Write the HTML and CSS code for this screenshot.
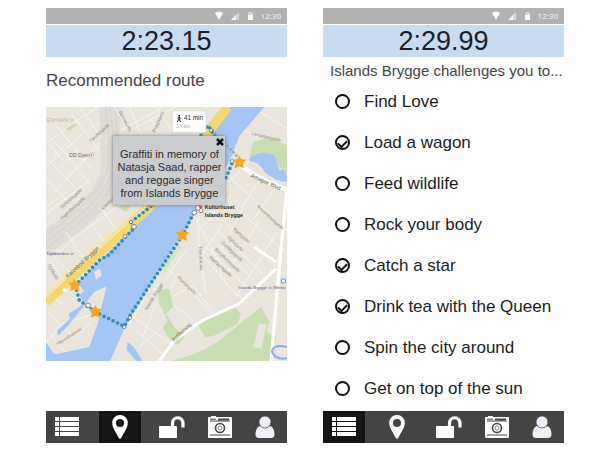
FILE: index.html
```html
<!DOCTYPE html>
<html lang="en">
<head>
<meta charset="utf-8">
<title>Islands Brygge</title>
<link rel="stylesheet" href="styles.css">
</head>
<body>
<svg class="sprite" aria-hidden="true">
  <symbol id="status" viewBox="0 0 38 12">
    <path d="M0 3Q4 0 8 3L4 10Z" fill="#fff"/>
    <path d="M16 10L24 2V10Z" fill="#d4d4d4"/><path d="M16 10L21 5V10Z" fill="#f4f4f4"/>
    <path d="M33 3H34V2H37V3H38V10H33Z" fill="#d8d8d8"/><path d="M33 5H38V10H33Z" fill="#fff"/>
  </symbol>
  <symbol id="list" viewBox="0 0 24 20">
    <path d="M0 0H4V4H0ZM5 0H24V4H5ZM0 5H4V9H0ZM5 5H24V9H5ZM0 10H4V14H0ZM5 10H24V14H5ZM0 15H4V19H0ZM5 15H24V19H5Z"/>
  </symbol>
  <symbol id="pin" viewBox="0 0 16 24">
    <path fill-rule="evenodd" d="M8 0A7.8 7.8 0 0 1 15.8 8C15.8 13 11.5 18 9.5 22.5Q8 25 6.500 22.500C4.500 18 .2 13 .2 8A7.800 7.800 0 0 1 8 0ZM8 4A4 4 0 1 0 8 12A4 4 0 0 0 8 4Z"/>
  </symbol>
  <symbol id="unlock" viewBox="0 0 26 22">
    <rect y="10" width="18" height="12" rx="1"/>
    <path d="M13.500 11V7.500A5.200 5.700 0 0 1 24 7.500V11.500" fill="none" stroke="#fff" stroke-width="3.200"/>
  </symbol>
  <symbol id="camera" viewBox="0 0 24 22">
    <rect y="1" width="24" height="21" rx="1"/><rect x="3" width="5" height="2"/>
    <path d="M2 3.200H8M2 5H22M2 19H22" fill="none" stroke="#444"/>
    <path d="M10 3.500H21" stroke="#444" stroke-width="2"/>
    <circle cx="12" cy="12" r="4.500" fill="#fff" stroke="#444" stroke-width="1.600"/>
    <circle cx="12" cy="12" r="2" fill="#fff" stroke="#888"/>
  </symbol>
  <symbol id="person" viewBox="0 0 20 22">
    <path d="M4.500 10Q10 13 15.500 10Q19.500 12 19.500 19Q19 22 16 22H4Q1 22 .5 19Q.5 12 4.500 10Z" fill="#f0eff5"/>
    <circle cx="10" cy="6" r="6" fill="#f0eff5" stroke="#444" stroke-width=".7"/>
  </symbol>
  <symbol id="star" viewBox="-20 -20 40 40">
    <path d="M0-20L6-9L20-8L11 3L14 18L0 12L-14 18L-11 3L-20-8L-6-9Z"/>
  </symbol>
</svg>

<main class="screens">
  <section class="screen">
    <header>
      <div class="status"><svg><use href="#status"/></svg><span>12:30</span></div>
      <div class="timer">2:23.15</div>
    </header>
    <h1 class="title route-title">Recommended route</h1>
    <div class="map">
      <svg class="map-art" viewBox="0 0 723 762" role="img" aria-label="Route map">
        <rect width="723" height="762" fill="#e9e5dc"/>
        <path d="M160 0H225L210 250Q180 330 0 445V365Q150 270 165 190Z" fill="#dedcd7"/>
        <g fill="none" stroke="#d3d2cf" stroke-width="3">
          <path d="M178 0Q196 110 184 190Q160 270 0 385M192 0Q208 110 198 195Q175 280 0 405M206 0Q220 120 210 200Q190 290 0 425"/>
        </g>
        <g fill="none" stroke="#f6f4ee" stroke-width="3">
          <path d="M0 110L80 50L155 0M0 180L110 80L160 50M20 260L90 190L165 105M0 80L60 140L130 230M30 55L140 190M75 20L160 130M0 150L90 245M0 215L60 280M20 150L80 90M40 185L100 120M60 215L130 140M0 300L60 255M0 320L130 220M10 110L50 160M100 0L165 90"/>
          <path d="M205 0L260 90M250 0L290 90M330 0L380 70M225 70L350 0M270 60L390 0M350 90L300 20M0 480L75 400L240 280M60 375L110 450M130 345L180 410M0 440L60 530M25 455L90 510M170 310L210 370"/>
          <path d="M445 325L520 470L530 520L605 590M455 330L460 430L480 560M470 300L560 215L640 130M500 240L723 440M540 200L723 370M590 180L680 90M620 0L723 65M580 60L723 140M530 340L690 480M510 365L650 500M490 390L625 520M480 420L600 540M465 440L560 550M530 350L450 470M590 300L500 490M640 340L530 520M690 380L570 570M560 260L480 350M420 430L320 570M360 480L500 620M320 540L440 640M400 500L370 550M300 570L250 650L350 740M260 630L390 720M330 590L290 690M280 720L360 650M380 570L440 535L500 610M640 220L590 300M690 240L620 340"/>
          <path d="M0 710L50 650L150 620M10 620L90 700M60 600L20 570M90 690L140 640M15 680L60 740"/>
        </g>
        <g fill="#c8ddb0">
          <path d="M455 655L560 595L585 620L575 650L500 688L478 690ZM370 762Q450 745 510 708L645 600L670 645L660 675L690 690L675 762Z"/>
          <path d="M335 550L370 545L382 600L360 620L385 660L415 690L395 715L365 690L350 660L365 640L340 590ZM620 105L665 92L723 115V200L700 180Q685 140 635 137L612 155ZM60 65L85 48L92 55L68 73ZM218 300L265 285L240 315Z"/>
          <path d="M392 410L405 420L355 500L348 485Z" fill="#d2e4c1"/>
        </g>
        <path d="M638 650L662 650L646 726L622 720Z" fill="#e9e5dc"/>
        <g fill="#a3c6f7">
          <path d="M552 0H655L580 87L550 165L460 302L400 390L240 655L192 762H0V725L30 742L130 720L155 650L182 538L145 555L95 620L65 658L36 686L34 670L72 635L68 620L115 590L95 555L88 535L245 378L270 340L320 285L460 95Z"/>
          <path d="M610 155Q640 125 685 145L700 190Q723 180 723 225Q690 225 655 195Q640 165 610 162ZM0 705L20 735L8 762H0ZM245 705L265 722L290 762H270L242 728Z"/>
        </g>
        <path d="M145 495L160 484L168 505L150 518ZM80 530L105 540L115 553L92 570Z" fill="#e9e5dc"/>
        <path d="M75 525L245 365" fill="none" stroke="#a3c6f7" stroke-width="5"/>
        <path d="M0 585L85 505L270 337L320 290L545 0" fill="none" stroke="#f6d66f" stroke-width="29"/>
        <path d="M0 570L85 490L270 325L310 290M0 555L110 450L260 315" fill="none" stroke="#f8e7ad" stroke-width="5"/>
        <g fill="none" stroke="#fff">
          <path d="M575 165Q620 210 723 248" stroke-width="14"/>
          <path d="M723 240L700 480L675 762" stroke-width="10"/>
          <path d="M340 762L385 700L470 640L580 590L690 485" stroke-width="9"/>
          <path d="M625 420L690 465" stroke-width="8"/>
        </g>
        <path d="M723 720Q680 710 678 735Q690 760 723 754" fill="none" stroke="#8eabe4" stroke-width="6"/>
        <path d="M500 70L580 155" fill="none" stroke="#9ba0a3" stroke-width="8" stroke-dasharray="0 13" stroke-linecap="round"/>
        <g class="route">
          <path d="M315 298L255 345L265 362L190 443L160 460L88 535L100 580L125 598L148 615L235 658L255 620L410 384L445 315"/>
          <path d="M540 212L562 160M515 100L486 55L465 85"/>
        </g>
        <g fill="#fff" stroke="#555" stroke-width="2">
          <circle cx="264" cy="359" r="7"/><circle cx="255" cy="345" r="5"/><circle cx="237" cy="388" r="5"/><circle cx="126" cy="595" r="7"/><circle cx="235" cy="660" r="5"/><circle cx="252" cy="632" r="5"/><circle cx="445" cy="317" r="7"/><circle cx="457" cy="302" r="8"/><circle cx="465" cy="311" r="6"/><circle cx="558" cy="163" r="5"/><circle cx="495" cy="70" r="5"/><circle cx="137" cy="144" r="7" stroke="#aaa"/><circle cx="137" cy="144" r="2"/><circle cx="57" cy="550" r="7" stroke="#ddd"/>
        </g>
        <path d="M457 292L470 300L462 306Z" fill="#d33b36"/>
        <g fill="#f5a623">
          <use href="#star" x="66" y="515" width="40" height="40"/><use href="#star" x="128" y="594" width="40" height="40"/><use href="#star" x="389" y="364" width="40" height="40"/><use href="#star" x="560" y="146" width="40" height="40"/><use href="#star" x="295" y="265" width="40" height="40"/>
        </g>
        <g class="street">
          <text transform="translate(135 107) rotate(-43)">Tøndergade</text>
          <text transform="translate(48 305) rotate(-42)">Dybbølsgade</text>
          <text transform="translate(48 338) rotate(-42)">Ingerslevsgade</text>
          <text transform="translate(172 308) rotate(-43)">Carsten</text>
          <text transform="translate(218 15) rotate(63)">Bernstorffs</text>
          <text transform="translate(326 77) rotate(-65)">Puggaards</text>
          <text transform="translate(616 83) rotate(14)">Langebrogade</text>
          <text transform="translate(632 300) rotate(42)">Reventlowsgade</text>
          <text transform="translate(560 368) rotate(42)">Njalsgade</text>
          <text transform="translate(543 392) rotate(44)">Egilsgade</text>
          <text transform="translate(525 407) rotate(44)">Gunløgsgade</text>
          <text transform="translate(505 428) rotate(44)">Bergthorasgade</text>
          <text transform="translate(489 453) rotate(42)">Halfdansgade</text>
          <text transform="translate(458 418) rotate(87)">Thorshavns</text>
          <text transform="translate(392 512) rotate(44)">Sturlasgade</text>
          <text transform="translate(303 610) rotate(-58)">Islands Brygge</text>
          <text transform="translate(35 715) rotate(-32)">Havneholmen</text>
          <text transform="translate(4 475) rotate(60)">Dybbøls</text>
        </g>
        <g class="road">
          <text transform="translate(65 514) rotate(-43)">Kalvebod Brygge</text>
          <text transform="translate(613 209) rotate(25)">Amager Blvd</text>
          <text transform="translate(383 705) rotate(-43)">Artillerivej</text>
        </g>
        <text class="district" x="2" y="46">ENHAVN V</text>
        <text class="place" x="70" y="150">DD Dyen</text>
        <text class="station" x="2" y="443">Dybbølsbro st</text>
        <text class="station" x="577" y="545">Islands Brygge st (Metro</text>
        <rect x="706" y="516" width="12" height="12" rx="3" fill="#fff" stroke="#4695d8" stroke-width="3"/>
        <g class="venue"><text x="476" y="306">Kulturhuset</text><text x="476" y="329">Islands Brygge</text></g>
        <rect x="380" y="12" width="100" height="65" fill="#fff" stroke="#d9d9d9" stroke-width="2"/>
        <circle cx="400" cy="26" r="3"/><path d="M400 30L399 36L394 45M399 36L404 45M394 34L400 31L406 35" fill="none" stroke="#222" stroke-width="3"/>
        <text class="walk" x="414" y="40">41 min</text><text class="distance" x="390" y="64">3.4 km</text>
      </svg>
      <div class="popup">
        <button class="close" aria-label="Close"><svg viewBox="0 0 8 8"><path d="M1 1L7 7M7 1L1 7"/></svg></button>
        <p>Graffiti in memory of<br>Natasja Saad, rapper<br>and reggae singer<br>from Islands Brygge</p>
      </div>
    </div>
    <nav class="tabs">
      <button aria-label="Challenges"><svg class="i-list"><use href="#list"/></svg></button>
      <button class="active" aria-label="Map"><svg class="i-pin"><use href="#pin"/></svg></button>
      <button aria-label="Unlock"><svg class="i-lock"><use href="#unlock"/></svg></button>
      <button aria-label="Camera"><svg class="i-camera"><use href="#camera"/></svg></button>
      <button aria-label="Profile"><svg class="i-person"><use href="#person"/></svg></button>
    </nav>
  </section>

  <section class="screen">
    <header>
      <div class="status"><svg><use href="#status"/></svg><span>12:30</span></div>
      <div class="timer">2:29.99</div>
    </header>
    <h1 class="title list-title">Islands Brygge challenges you to...</h1>
    <ul class="challenges">
      <li><label><input type="checkbox">Find Love</label></li>
      <li><label><input type="checkbox" checked>Load a wagon</label></li>
      <li><label><input type="checkbox">Feed wildlife</label></li>
      <li><label><input type="checkbox">Rock your body</label></li>
      <li><label><input type="checkbox" checked>Catch a star</label></li>
      <li><label><input type="checkbox" checked>Drink tea with the Queen</label></li>
      <li><label><input type="checkbox">Spin the city around</label></li>
      <li><label><input type="checkbox">Get on top of the sun</label></li>
    </ul>
    <nav class="tabs">
      <button class="active" aria-label="Challenges"><svg class="i-list"><use href="#list"/></svg></button>
      <button aria-label="Map"><svg class="i-pin"><use href="#pin"/></svg></button>
      <button aria-label="Unlock"><svg class="i-lock"><use href="#unlock"/></svg></button>
      <button aria-label="Camera"><svg class="i-camera"><use href="#camera"/></svg></button>
      <button aria-label="Profile"><svg class="i-person"><use href="#person"/></svg></button>
    </nav>
  </section>
</main>
</body>
</html>
```
FILE: styles.css
```css
* { box-sizing: border-box; }
body {
  margin: 0;
  background: #fff;
  color: #222;
  font-family: "Liberation Sans", Arial, sans-serif;
}
.sprite { position: absolute; width: 0; height: 0; }
.screens {
  display: grid;
  grid-template-columns: 1fr 1fr;
  gap: 36px;
  min-height: 100vh;
  padding: 8px 38px 7px 46px;
}
.screen { display: flex; flex-direction: column; min-width: 0; }

.status {
  display: flex;
  align-items: center;
  justify-content: flex-end;
  gap: 8px;
  height: 16px;
  padding-right: 6px;
  background: #b1b1b1;
  color: #f2f2f2;
  font: 8px/16px "Open Sans", sans-serif;
}
.status svg { width: 38px; height: 12px; }
.timer {
  margin-top: 1px;
  background: #c8dbf0;
  color: #1b1f2a;
  font-size: 27px;
  line-height: 32px;
  text-align: center;
}
.title { margin: 0; color: #444; font-weight: 400; white-space: nowrap; }
.route-title { padding: 14px 0 16px; font-size: 17px; line-height: 20px; }
.list-title { padding: 4px 0 0 7px; font-size: 15px; line-height: 20px; }

.map { position: relative; }
.map-art { display: block; width: 100%; height: auto; overflow: hidden; }
.route path {
  fill: none;
  stroke: #288fc0;
  stroke-width: 11;
  stroke-linecap: round;
  stroke-dasharray: 0 15;
}
.street { fill: #8b8883; font-size: 14px; }
.road { fill: #65605a; font-size: 17px; }
.district { fill: #c1b9a5; font-size: 16px; }
.place { fill: #666; font-size: 15px; }
.station { fill: #41557e; font-size: 13px; }
.venue { fill: #222; font-size: 16px; font-weight: 700; }
.walk { fill: #222; font-size: 19px; }
.distance { fill: #aaa; font-size: 14px; }

.popup {
  position: absolute;
  top: 29px;
  left: 28%;
  padding: 12px 4px 5px;
  background: #cbcccf;
  box-shadow: 0 0 4px #777;
  color: #2b2b2e;
  font-size: 11px;
  line-height: 13px;
  text-align: center;
  white-space: nowrap;
}
.popup p { margin: 0; }
.close {
  position: absolute;
  top: 2px;
  right: 1px;
  display: flex;
  padding: 0;
  border: 0;
  background: none;
}
.close svg { width: 8px; height: 8px; }
.close path { stroke: #111; stroke-width: 2.5; }

.challenges { margin: 0; padding: 0 0 0 12px; list-style: none; }
.challenges label {
  display: flex;
  align-items: center;
  gap: 14px;
  height: 41px;
  color: #1c1c1c;
  font-size: 17px;
  white-space: nowrap;
}
.challenges input {
  appearance: none;
  display: flex;
  align-items: flex-start;
  justify-content: center;
  flex: none;
  width: 15px;
  height: 15px;
  margin: 0;
  padding-top: 3px;
  border: 2px solid #111;
  border-radius: 50%;
}
.challenges input:checked::after {
  content: "";
  width: 7px;
  height: 4px;
  border: solid #111;
  border-width: 0 0 2px 2px;
  transform: rotate(-45deg);
}

.tabs {
  display: grid;
  grid-template-columns: 48fr 52fr 51fr 46fr 44fr;
  justify-items: center;
  height: 32px;
  margin-top: auto;
  background: #444;
}
.tabs button {
  display: flex;
  align-items: center;
  justify-content: center;
  width: 42px;
  padding: 0;
  border: 0;
  background: none;
}
.tabs button:first-child { justify-self: start; }
.tabs .active { background: #151515; }
.tabs svg { fill: #fff; }
.i-list { width: 24px; height: 20px; }
.i-pin { width: 16px; height: 24px; }
.i-lock { width: 26px; height: 22px; }
.i-camera { width: 24px; height: 22px; }
.i-person { width: 20px; height: 22px; }
```
